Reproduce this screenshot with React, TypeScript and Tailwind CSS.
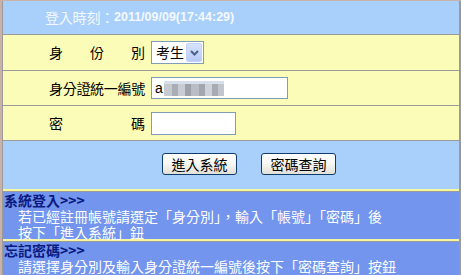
import React from 'react';

const CJK = '"Noto Sans CJK TC", "Liberation Sans", sans-serif';

function Label({ text, spread }: { text: string; spread?: boolean }) {
  const chars = Array.from(text);
  return (
    <div className="flex w-[148px] shrink-0 justify-end pr-[6px]">
      <div
        className={
          spread
            ? 'flex w-[96px] justify-between text-[14px] text-black'
            : 'w-[96px] text-[14px] tracking-[-0.3px] text-black whitespace-nowrap'
        }
      >
        {spread ? chars.map((c, i) => <span key={i}>{c}</span>) : text}
      </div>
    </div>
  );
}

function XpButton({ children }: { children: React.ReactNode }) {
  return (
    <button className="h-[22px] w-[75px] rounded-[3px] border border-[#0f3b6e] bg-gradient-to-b from-white via-[#f6f6f2] to-[#e2e1d8] text-[14px] leading-none text-black">
      {children}
    </button>
  );
}

export default function App() {
  return (
    <div className="h-[275px] w-[461px] overflow-hidden bg-white" style={{ fontFamily: CJK }}>
      <div className="flex h-full flex-col border-l-2 border-t border-[#cbb2a9] bg-[#c9c2b4]">
        <div className="flex h-full flex-col border-l border-r-2 border-[#9a9a9a]">
          {/* header */}
          <div className="flex h-[34px] items-center border-b border-[#9a9a9a] bg-[#a9cffb] pl-[42px] text-[#f4f9ff]">
            <span className="text-[14px] tracking-[-0.2px]">登入時刻：</span>
            <span className="text-[12.5px] font-bold" style={{ fontFamily: '"Liberation Sans", Arial, sans-serif' }}>
              2011/09/09(17:44:29)
            </span>
          </div>

          {/* 身份別 */}
          <div className="flex h-[36px] items-center border-b border-[#9a9a9a] bg-[#fcfcb9]">
            <Label text="身份別" spread />
            <div className="flex h-[23px] w-[53px] items-center justify-between border border-[#7f9db9] bg-white pl-[4px] pr-[1px]">
              <span className="text-[14px] text-black">考生</span>
              <span className="flex h-[19px] w-[16px] items-center justify-center rounded-[2px] border border-[#c3d3fd] bg-gradient-to-b from-[#d7e3fd] to-[#b7cbf8]">
                <svg width="9" height="6" viewBox="0 0 9 6">
                  <path d="M1 1 L4.5 4.5 L8 1" stroke="#4d6185" strokeWidth="2" fill="none" />
                </svg>
              </span>
            </div>
          </div>

          {/* 身分證統一編號 */}
          <div className="flex h-[35px] items-center border-b border-[#9a9a9a] bg-[#fcfcb9]">
            <Label text="身分證統一編號" />
            <div className="flex h-[22px] w-[137px] items-center border border-[#7f9db9] bg-white pl-[3px]">
              <span className="text-[14px] text-black" style={{ fontFamily: '"Liberation Sans", sans-serif' }}>a</span>
              <span className="ml-[1px] flex h-[15px] items-end bg-[#d6dfea]">
                <span className="h-[12px] w-[8px] bg-[#c6c9d0]" />
                <span className="h-[12px] w-[6px] bg-[#a9adb6]" />
                <span className="h-[12px] w-[7px] bg-[#c9ccd3]" />
                <span className="h-[12px] w-[6px] bg-[#9da1aa]" />
                <span className="h-[12px] w-[8px] bg-[#b9bcc4]" />
                <span className="h-[12px] w-[6px] bg-[#a2a6ae]" />
                <span className="h-[12px] w-[7px] bg-[#cfd2d8]" />
                <span className="h-[12px] w-[6px] bg-[#a7abb3]" />
                <span className="h-[12px] w-[6px] bg-[#c2c5cc]" />
              </span>
            </div>
          </div>

          {/* 密碼 */}
          <div className="flex h-[35px] items-center border-b border-[#9a9a9a] bg-[#fcfcb9]">
            <Label text="密碼" spread />
            <div className="h-[23px] w-[85px] border border-[#7f9db9] bg-white" />
          </div>

          {/* buttons */}
          <div className="flex h-[50px] items-start gap-[24px] border-b-2 border-[#f6f6a0] bg-[#a9cffb] pl-[159px] pt-[12px]">
            <XpButton>進入系統</XpButton>
            <XpButton>密碼查詢</XpButton>
          </div>

          {/* 系統登入 */}
          <div className="flex h-[50px] flex-col border-t border-[#9a9a9a] border-b-2 border-b-[#f6f6a0] bg-[#7395ee] pl-[1px] text-[14px] leading-[16px]">
            <div className="font-bold text-[#0a1a80]">系統登入&gt;&gt;&gt;</div>
            <div className="pl-[14px] text-white">若已經註冊帳號請選定「身分別」，輸入「帳號」「密碼」後</div>
            <div className="pl-[14px] text-white">按下「進入系統」鈕</div>
          </div>

          {/* 忘記密碼 */}
          <div className="flex flex-1 flex-col border-t border-[#9a9a9a] bg-[#7395ee] pl-[1px] text-[14px] leading-[16px]">
            <div className="font-bold text-[#0a1a80]">忘記密碼&gt;&gt;&gt;</div>
            <div className="pl-[14px] text-white">請選擇身分別及輸入身分證統一編號後按下「密碼查詢」按鈕</div>
          </div>
        </div>
      </div>
    </div>
  );
}
